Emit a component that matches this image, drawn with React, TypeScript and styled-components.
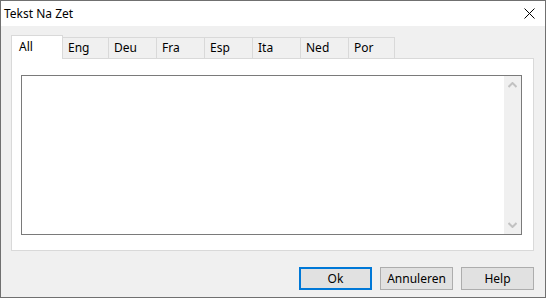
import { FC } from 'react';
import styled, { createGlobalStyle } from 'styled-components';

const GlobalStyle = createGlobalStyle`
  html, body {
    margin: 0;
    padding: 0;
    background: #ffffff;
  }
  * {
    box-sizing: border-box;
  }
`;

const Window = styled.div`
  width: 546px;
  height: 298px;
  border: 1px solid #707070;
  background: #f0f0f0;
  display: flex;
  flex-direction: column;
  font-family: 'Noto Sans', sans-serif;
  font-size: 12px;
  color: #000;
`;

const TitleBar = styled.div`
  height: 25px;
  background: #fff;
  display: flex;
  align-items: center;
  justify-content: space-between;
  padding: 0 10px 1px 3px;
`;

const Title = styled.span`
  font-size: 12px;
`;

const CloseIcon = styled.svg`
  width: 11px;
  height: 11px;
  display: block;
`;

const Body = styled.div`
  flex: 1;
  display: flex;
  flex-direction: column;
  padding: 8px 11px 7px 10px;
`;

const TabStrip = styled.div`
  display: flex;
  align-items: flex-end;
  height: 24px;
  position: relative;
  z-index: 1;
`;

const Tab = styled.div<{ $w: number; $active?: boolean }>`
  width: ${(p) => p.$w}px;
  height: ${(p) => (p.$active ? 24 : 21)}px;
  margin-bottom: ${(p) => (p.$active ? -1 : 0)}px;
  background: ${(p) => (p.$active ? '#fff' : '#f0f0f0')};
  border: 1px solid #d9d9d9;
  border-bottom: none;
  border-left: ${(p) => (p.$active ? '1px solid #d9d9d9' : 'none')};
  padding: ${(p) => (p.$active ? '3px 0 0 7px' : '2px 0 0 5px')};
  font-size: 12px;
  line-height: 15px;
`;

const Panel = styled.div`
  height: 193px;
  background: #fff;
  border: 1px solid #d9d9d9;
  padding: 16px 11px 15px 9px;
`;

const TextBox = styled.div`
  height: 160px;
  border: 1px solid #7a7a7a;
  background: #fff;
  display: flex;
  justify-content: flex-end;
`;

const ScrollBar = styled.div`
  width: 17px;
  background: #f0f0f0;
  display: flex;
  flex-direction: column;
  justify-content: space-between;
  align-items: center;
  padding: 6px 0 6px;
`;

const Arrow = styled.svg`
  width: 9px;
  height: 6px;
  display: block;
`;

const ButtonRow = styled.div`
  display: flex;
  justify-content: flex-end;
  gap: 8px;
  margin-top: auto;
`;

const Button = styled.button<{ $default?: boolean }>`
  width: 73px;
  height: 23px;
  background: #e1e1e1;
  border: ${(p) => (p.$default ? '2px solid #0078d7' : '1px solid #adadad')};
  font-family: 'Noto Sans', sans-serif;
  font-size: 12px;
  color: #000;
  padding: 0;
  line-height: 1;
`;

const tabs: { label: string; w: number }[] = [
  { label: 'Eng', w: 46 },
  { label: 'Deu', w: 48 },
  { label: 'Fra', w: 48 },
  { label: 'Esp', w: 48 },
  { label: 'Ita', w: 48 },
  { label: 'Ned', w: 48 },
  { label: 'Por', w: 46 },
];

const App: FC = () => {
  return (
    <>
      <GlobalStyle />
      <Window>
        <TitleBar>
          <Title>Tekst Na Zet</Title>
          <CloseIcon viewBox="0 0 11 11">
            <path d="M0.5 0.5 L10.5 10.5 M10.5 0.5 L0.5 10.5" stroke="#000" strokeWidth="1" fill="none" />
          </CloseIcon>
        </TitleBar>
        <Body>
          <TabStrip>
            <Tab $w={52} $active>
              All
            </Tab>
            {tabs.map((t) => (
              <Tab key={t.label} $w={t.w}>
                {t.label}
              </Tab>
            ))}
          </TabStrip>
          <Panel>
            <TextBox>
              <ScrollBar>
                <Arrow viewBox="0 0 9 6">
                  <path d="M0.5 5 L4.5 1 L8.5 5" stroke="#c2c2c2" strokeWidth="2" fill="none" />
                </Arrow>
                <Arrow viewBox="0 0 9 6">
                  <path d="M0.5 1 L4.5 5 L8.5 1" stroke="#c2c2c2" strokeWidth="2" fill="none" />
                </Arrow>
              </ScrollBar>
            </TextBox>
          </Panel>
          <ButtonRow>
            <Button $default>Ok</Button>
            <Button>Annuleren</Button>
            <Button>Help</Button>
          </ButtonRow>
        </Body>
      </Window>
    </>
  );
};

export default App;
